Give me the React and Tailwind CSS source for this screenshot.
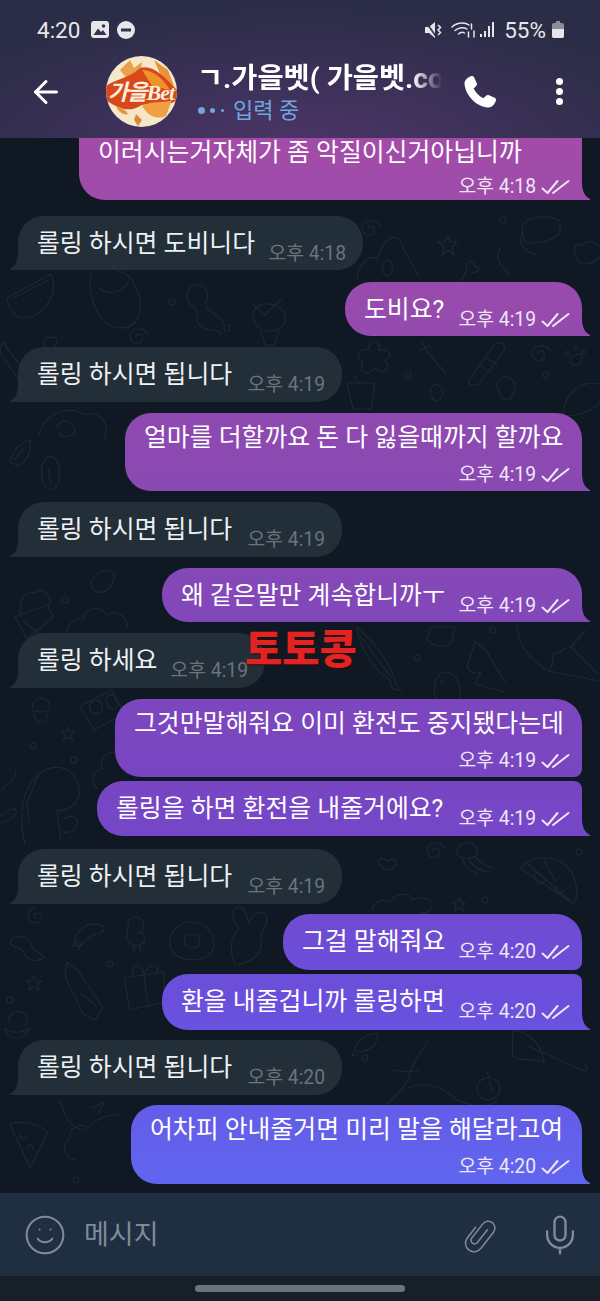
import React from "react";
import { ArrowLeft, Smile, Mic } from "lucide-react";

const KR = "font-['Roboto','Noto_Sans_CJK_KR',sans-serif]";
const GRAD = "bg-[linear-gradient(180deg,#a34ca8_130px,#8a49b2_480px,#7845c2_780px,#6a4fdc_1000px,#6065f0_1180px)] bg-fixed";

const messages = [
  { out: true, text: "이러시는거자체가 좀 악질이신거아닙니까", time: "오후 4:18", box: "w-[503px] h-[62px] mt-0 rounded-t-none", stacked: true, first: true, tail: true },
  { text: "롤링 하시면 도비니다", time: "오후 4:18", box: "w-[345px] h-[54px] mt-[16px]", tail: true },
  { out: true, text: "도비요?", time: "오후 4:19", box: "w-[237px] h-[54px] mt-[12px]", tail: true },
  { text: "롤링 하시면 됩니다", time: "오후 4:19", box: "w-[324px] h-[55px] mt-[11px]", tail: true },
  { out: true, text: "얼마를 더할까요 돈 다 잃을때까지 할까요", time: "오후 4:19", box: "w-[457px] h-[78px] mt-[11px]", stacked: true, tail: true },
  { text: "롤링 하시면 됩니다", time: "오후 4:19", box: "w-[324px] h-[55px] mt-[11px]", tail: true },
  { out: true, text: "왜 같은말만 계속합니까ㅜ", time: "오후 4:19", box: "w-[420px] h-[54px] mt-[11px]", tail: true },
  { text: "롤링 하세요", time: "오후 4:19", box: "w-[247px] h-[55px] mt-[11px]", tail: true },
  { out: true, text: "그것만말해줘요 이미 환전도 중지됐다는데", time: "오후 4:19", box: "w-[467px] h-[78px] mt-[11px] rounded-br-[8px]", stacked: true },
  { out: true, text: "롤링을 하면 환전을 내줄거에요?", time: "오후 4:19", box: "w-[485px] h-[55px] mt-[4px] rounded-tr-[8px]", tail: true },
  { text: "롤링 하시면 됩니다", time: "오후 4:19", box: "w-[324px] h-[55px] mt-[13px]", tail: true },
  { out: true, text: "그걸 말해줘요", time: "오후 4:20", box: "w-[299px] h-[56px] mt-[10px] rounded-br-[8px]" },
  { out: true, text: "환을 내줄겁니까 롤링하면", time: "오후 4:20", box: "w-[420px] h-[56px] mt-[4px] rounded-tr-[8px]", tail: true },
  { text: "롤링 하시면 됩니다", time: "오후 4:20", box: "w-[324px] h-[55px] mt-[10px]", tail: true },
  { out: true, text: "어차피 안내줄거면 미리 말을 해달라고여", time: "오후 4:20", box: "w-[451px] h-[79px] mt-[10px]", stacked: true, tail: true },
];

// wallpaper sketches: [x, y, path]
const doodles = [
  [5, 272, "M2 26 L46 2 C54 22 40 46 16 46 C8 44 4 36 2 26 Z M8 26 L44 8 M18 26 v2 M30 18 v2 M24 34 v2 M36 28 v2"],
  [85, 268, "M6 4 C2 30 14 60 36 60 C56 60 60 36 50 18 C46 8 38 2 32 4 M14 20 C24 28 38 24 44 14"],
  [180, 283, "M14 2 C4 6 6 20 14 24 C22 30 12 38 22 44 C32 50 40 44 42 54 M14 2 C26 0 30 12 26 20 C24 30 38 28 44 40"],
  [245, 293, "M8 12 L20 22 L36 6 M10 16 C4 26 12 38 24 38 C38 38 44 28 38 18 C32 10 16 8 10 16 M16 38 L20 52 H30 L34 38"],
  [0, 340, "M0 8 L4 2 L8 10 L26 32 L18 38 L2 16 Z"],
  [40, 335, "M8 14 C0 8 4 0 10 3 C16 -1 20 6 14 12 Z"],
  [128, 328, "M8 8 C10 4 16 6 14 12 C12 18 2 16 2 8 C2 0 16 -2 20 6"],
  [35, 405, "M4 30 C10 6 36 0 50 10 C66 4 76 20 68 36 M22 22 C26 14 36 14 40 24 C40 32 28 34 24 28"],
  [10, 440, "M0 22 C4 8 12 2 20 0 C22 12 16 22 8 26 Z M4 20 L14 8"],
  [40, 455, "M8 2 C18 -2 22 16 18 28 C14 38 2 36 2 22 C0 12 2 6 8 2 Z M8 14 C10 18 8 24 12 28"],
  [13, 587, "M2 30 L34 18 L40 30 L14 52 Z M8 28 C4 14 14 2 22 6 C30 0 40 8 36 20 M10 34 L28 48"],
  [90, 570, "M2 10 C8 0 18 -2 24 4 C26 14 16 24 8 22 C2 20 0 16 2 10 Z M8 12 h1 M16 10 h1"],
  [65, 605, "M2 26 C4 14 14 14 18 14 C20 2 36 0 42 10 C52 4 64 12 62 24"],
  [78, 690, "M2 16 L34 0 L46 24 L16 40 Z M12 20 a6 6 0 1 0 12 -6 a6 6 0 1 0 -12 6 M30 14 a5 5 0 1 0 8 -4 a5 5 0 1 0 -8 4"],
  [30, 695, "M2 14 C2 2 18 -2 20 12 C20 18 2 18 2 14 Z M4 18 C4 28 16 32 18 18"],
  [62, 727, "M6 0 L8 5 L13 5 L9 8 L11 13 L6 10 L1 13 L3 8 L-1 5 L4 5 Z"],
  [15, 760, "M10 84 C4 60 4 24 30 10 C46 2 62 12 64 28 C66 44 52 52 42 50 L46 82 M24 14 L18 28 L12 42 L14 62 M50 58 C58 54 66 58 60 68 C56 74 50 72 46 72"],
  [90, 745, "M8 44 C-2 36 4 24 12 24 C8 8 26 2 34 12"],
  [0, 760, "M2 30 C8 22 16 20 16 10"],
  [0, 805, "M0 12 C10 2 18 2 16 8 C12 16 4 18 0 18"],
  [25, 905, "M10 2 C2 4 0 16 10 18 C18 18 20 8 12 8 C8 8 8 14 12 13"],
  [70, 920, "M4 24 C6 8 20 0 34 6 C36 16 22 12 16 20 C12 26 8 28 4 24 Z M8 20 L2 28 M12 22 L8 30"],
  [120, 915, "M8 12 a8 8 0 1 1 10 6 C26 16 28 26 20 30 C10 32 4 26 8 12 Z M14 30 V38 M20 30 V36"],
  [168, 920, "M24 2 C36 2 46 12 46 24 C46 34 36 40 24 40 C10 40 2 32 2 22 C2 10 12 2 24 2 Z M24 14 C30 14 32 18 32 22 C32 26 28 28 24 28 C18 28 16 24 16 20 C16 16 20 14 24 14 Z"],
  [225, 905, "M10 60 C2 40 8 30 14 24 C6 14 6 2 14 2 C22 2 22 16 24 18 C28 6 40 4 42 14 C42 24 34 26 36 36 C38 48 28 58 10 60 Z M16 36 h1 M26 34 h1"],
  [8, 935, "M2 6 C10 -2 22 2 24 12 C28 18 34 18 36 22 M2 6 C2 14 14 10 16 18 C20 26 30 28 36 22"],
  [27, 975, "M7 0 L9 5 L15 6 L10 9 L12 15 L7 12 L2 15 L4 9 L-1 6 L5 5 Z"],
  [65, 960, "M2 2 L14 12 L38 48 L30 60 L18 54 L0 16 Z M16 34 L32 46"],
  [122, 960, "M2 18 L42 12 V42 L8 50 Z M2 18 L8 50 M22 16 L26 46 M12 16 C6 4 20 2 22 14 C26 2 40 4 34 14"],
  [5, 1008, "M4 14 C2 6 14 0 20 6 C24 12 22 16 20 18 M0 20 C2 34 20 34 24 20 C16 26 8 26 0 20 Z"],
  [8, 1120, "M2 4 C14 0 30 4 40 12 L22 48 Z M12 14 a3 3 0 1 0 6 2 M24 30 a3 3 0 1 0 -5 -2"],
  [60, 1100, "M16 60 C4 58 0 44 10 38 C8 28 20 22 28 28 C36 18 54 12 60 16 M0 0 C4 16 12 30 24 30 M32 8 L44 2 L38 14"],
  [360, 220, "M8 8 C10 4 16 6 14 12 C12 18 2 16 2 8 C2 0 16 -2 20 6"],
  [355, 235, "M2 44 C4 26 18 18 22 24 C26 8 38 -2 44 4 C48 14 58 30 64 42 M30 26 a5 8 0 1 0 2 -1"],
  [440, 235, "M8 0 L10 7 L17 7 L12 12 L14 20 L8 15 L2 20 L4 12 L-2 7 L5 7 Z"],
  [455, 260, "M4 24 L12 10 C8 2 18 -2 20 6 C26 6 24 14 16 12"],
  [495, 245, "M6 2 C-2 14 8 22 14 30"],
  [520, 215, "M2 10 C10 0 30 0 40 6 V18 C30 28 12 30 4 26 Z M2 18 C-2 28 4 36 16 40"],
  [570, 240, "M6 14 C2 6 8 2 12 6 C16 0 26 0 30 8 C34 16 26 24 14 24 C8 24 6 20 6 14 Z"],
  [355, 340, "M20 2 C24 2 26 8 24 10 C34 8 40 16 30 20 C38 28 28 36 20 28 C14 38 2 32 8 22 C-2 18 4 6 14 10 C12 6 16 2 20 2 Z"],
  [345, 375, "M2 8 H30 L26 34 H8 Z M10 0 C10 6 14 8 16 8"],
  [465, 340, "M4 40 L30 4 C38 0 42 6 38 12 L14 44 C8 46 2 46 4 40 Z M14 26 L26 32 M20 18 L32 24"],
  [420, 340, "M2 2 L6 10 L26 34 M10 6 L0 10"],
  [530, 345, "M8 8 C10 4 16 6 14 12 C12 18 2 16 2 8 C2 0 16 -2 20 6"],
  [565, 345, "M10 10 C18 6 20 18 12 20 C4 20 2 12 10 10 Z M2 6 a2 2 0 1 0 1 0 M10 1 a2 2 0 1 0 1 0 M18 5 a2 2 0 1 0 1 0"],
  [430, 385, "M4 0 C12 -2 16 10 8 16 C0 16 -2 4 4 0 Z"],
  [495, 375, "M2 10 C6 -2 20 0 20 12 C20 18 16 20 16 24 H8 C8 20 2 18 2 10 Z"],
  [560, 380, "M4 36 C2 14 20 0 40 4 M4 36 C20 36 34 30 40 22 M12 16 h1"],
  [355, 625, "M2 2 C16 14 38 40 40 58 L46 66 L38 64 L34 54 C22 48 4 24 2 2 Z M6 12 L36 52"],
  [425, 625, "M6 2 L30 2 L26 18 C18 24 6 20 2 14 Z"],
  [465, 640, "M10 2 L2 26 C4 34 14 34 16 32 L10 44 L40 52 M10 2 C16 6 24 12 24 16 L34 32 L40 42"],
  [432, 670, "M14 2 C24 2 30 16 28 30 H4 C0 18 4 2 14 2 Z M10 10 v4"],
  [515, 625, "M2 0 C4 22 14 34 34 46 L84 56 M34 46 C40 38 36 30 40 28 C48 28 50 20 56 22 L70 6 M56 22 L82 48"],
  [425, 842, "M8 8 C10 4 16 6 14 12 C12 18 2 16 2 8 C2 0 16 -2 20 6"],
  [375, 858, "M10 12 C2 6 2 0 8 1 C12 1 14 4 14 4 C16 0 22 0 21 6 C20 10 14 12 10 12 Z"],
  [455, 840, "M2 12 C2 2 18 -2 22 10 C24 16 18 18 10 18 C6 18 2 16 2 12 Z M8 18 C8 26 16 30 22 34 M14 18 C16 26 24 30 32 32 M20 16 C22 20 30 26 38 28"],
  [518, 852, "M2 16 C16 0 42 4 52 18 C60 32 60 44 56 52 Z M10 12 L56 52 M26 8 L38 30 M20 20 a6 6 0 1 0 8 8 M40 34 a4 4 0 1 0 6 4"],
  [370, 890, "M2 20 C4 10 14 8 20 12 C26 2 40 2 42 10 C50 6 64 8 62 16 C62 22 54 24 50 22"],
  [452, 898, "M7 0 L9 4 L13 5 L10 8 L11 13 L7 10 L3 13 L4 8 L0 5 L5 4 Z"],
  [352, 1030, "M2 20 C6 8 18 2 26 4 C26 14 16 22 8 22 Z M2 20 L0 26 L6 24"],
  [385, 1040, "M2 64 C12 54 20 50 24 36 C28 20 38 10 42 2 M24 48 C40 40 60 48 72 60 C86 66 98 68 112 62 M8 30 C16 32 28 32 34 30"],
  [510, 1030, "M4 0 C20 2 32 16 34 32 C22 28 12 32 2 26 C4 18 0 8 4 0 Z M18 16 L72 40 C80 44 78 34 74 36"],
  [475, 1070, "M4 12 C10 6 20 6 24 14 C28 24 20 30 12 30 C2 28 0 20 4 12 Z M12 2 L14 8 M14 12 L18 22"],
];
const dots = [[172, 302], [227, 328], [65, 600], [33, 746], [74, 760], [110, 964], [417, 658], [493, 630], [503, 220], [408, 375], [546, 375], [579, 852], [485, 900], [365, 1058], [10, 1000], [76, 1180]];

const Checks = () => (
  <svg width="29" height="16" viewBox="0 0 29 16" fill="none" stroke="#f0e6f6" strokeWidth="2" strokeLinecap="round" strokeLinejoin="round">
    <path d="M1.5 9.5 L6.5 14 L16.5 2" />
    <path d="M12 14 L27.5 2" />
  </svg>
);

const Meta = ({ msg }) => (
  <div className={`flex items-center gap-[5px] text-[19.3px] leading-[24px] whitespace-nowrap ${msg.out ? "text-[#f0e6f6]" : "text-[#69747f]"}`}>
    <span>{msg.time}</span>
    {msg.out && <Checks />}
  </div>
);

const Bubble = ({ msg }) => {
  const tone = msg.out
    ? `${GRAD} self-end mr-[18px] text-white`
    : "bg-[#222e38] self-start ml-[18px] text-[#eef1f4]";
  const corners = msg.tail
    ? msg.out
      ? "rounded-[26px] rounded-br-none"
      : "rounded-[26px] rounded-bl-none"
    : "rounded-[26px]";
  const pad = msg.out ? "pl-[19px] pr-[12px]" : "pl-[19px] pr-[17px]";
  return (
    <div className={`relative shrink-0 ${tone} ${corners} ${msg.box}`}>
      {msg.stacked ? (
        <div className={`flex h-full flex-col ${pad} ${msg.first ? "pt-[0px]" : "pt-[10px]"}`}>
          <p className="text-[24.85px] leading-[30px] whitespace-nowrap">{msg.text}</p>
          <div className={`flex justify-end ${msg.first ? "mt-[7px]" : "mt-[10px]"}`}>
            <Meta msg={msg} />
          </div>
        </div>
      ) : (
        <div className={`flex h-full justify-between ${pad}`}>
          <p className="pt-[13px] text-[24.85px] leading-[30px] whitespace-nowrap">{msg.text}</p>
          <div className="pt-[26px]">
            <Meta msg={msg} />
          </div>
        </div>
      )}
      {msg.tail && !msg.out && (
        <div className="absolute left-[-9px] bottom-0 h-[18px] w-[10px] bg-[#222e38] [clip-path:path('M10_0L9_0C9_8_7_14_1_17Q0_18_2_18L10_18Z')]" />
      )}
      {msg.tail && msg.out && (
        <div className={`absolute right-[-9px] bottom-0 h-[18px] w-[10px] ${GRAD} [clip-path:path('M0_0L1_0C1_8_3_14_9_17Q10_18_8_18L0_18Z')]`} />
      )}
    </div>
  );
};

const Doodles = () => (
  <svg className="absolute inset-0 h-full w-full" viewBox="0 0 600 1301" fill="none" stroke="#1c2835" strokeWidth="1.2" strokeLinecap="round" strokeLinejoin="round">
    {doodles.map(([x, y, d], i) => (
      <path key={i} d={d} transform={`translate(${x} ${y})`} />
    ))}
    {dots.map(([x, y], i) => (
      <circle key={i} cx={x} cy={y} r="3" />
    ))}
  </svg>
);

const Avatar = () => (
  <svg className="shrink-0" width="71" height="71" viewBox="0 0 71 71">
    <defs>
      <clipPath id="av"><circle cx="35.5" cy="35.5" r="35.5" /></clipPath>
    </defs>
    <g clipPath="url(#av)">
      <rect width="71" height="71" fill="#f6e7cb" />
      <path d="M14 14 L24 4 L28 12 L36 6 L34 18 L22 24 Z" fill="#eaa04a" />
      <path d="M48 4 L62 14 L68 30 L56 22 Z" fill="#e8943a" />
      <path d="M0 30 C12 22 24 22 34 12 C46 8 58 20 71 34 L71 44 C58 54 46 44 34 50 C22 58 8 50 0 44 Z" fill="#d8481a" />
      <path d="M36 14 C48 14 58 24 64 34 L46 30 Z" fill="#f0922a" />
      <path d="M36 50 C46 44 56 48 66 44 L60 60 C50 64 42 60 36 50 Z" fill="#f0a040" />
      <path d="M10 50 C16 52 20 54 22 58 C18 60 12 56 10 50 Z" fill="#e09a4a" />
      <path d="M30 58 L36 64 L32 70 L28 64 Z" fill="#d88a3a" />
    </g>
    <text x="35" y="44" textAnchor="middle" fontSize="22" fontWeight="700" fontStyle="italic" fill="#fbeedd" fontFamily="'Liberation Serif','Noto Sans CJK KR',serif" letterSpacing="-1">가을Bet</text>
  </svg>
);

const StatusBar = () => (
  <div className="flex h-[44px] items-start pl-[37px] pr-[36px] pt-[17px] text-[#e6e6ec]">
    <span className="text-[22.5px] leading-[26px]">4:20</span>
    <svg className="ml-[11px] mt-[4px]" width="18" height="17" viewBox="0 0 18 17">
      <rect width="18" height="17" rx="3" fill="#e6e6ec" />
      <circle cx="12.5" cy="5" r="1.8" fill="#3a3048" />
      <path d="M2.5 14 L7 7.5 L10 11 L12 9 L15.5 14 Z" fill="#3a3048" />
    </svg>
    <svg className="ml-[8px] mt-[4px]" width="18" height="18" viewBox="0 0 18 18">
      <circle cx="9" cy="9" r="9" fill="#e6e6ec" />
      <rect x="4" y="7.5" width="10" height="3" fill="#33304a" />
    </svg>
    <svg className="ml-auto mt-[4px]" width="18" height="18" viewBox="0 0 18 18" fill="#e6e6ec">
      <path d="M0 6 H4 L10 1 V17 L4 12 H0 Z" />
      <path d="M1 1 L12 17" stroke="#33304a" strokeWidth="1.6" />
      <path d="M13 4 L15.5 6.5 L13 9 L15.5 11.5 L13 14" stroke="#e6e6ec" strokeWidth="1.5" fill="none" />
    </svg>
    <svg className="ml-[8px] mt-[4px]" width="25" height="18" viewBox="0 0 25 18" fill="none" stroke="#e6e6ec" strokeWidth="1.5" strokeLinecap="round">
      <path d="M1 6 C6 1 14 1 18 4" />
      <path d="M4 9.5 C8 6 13 6 16 8" />
      <path d="M7.5 13 C9.5 11 12 11 13.5 12" />
      <path d="M20.5 3 V8 M17.5 11 V16 M23 10 V16" />
    </svg>
    <svg className="ml-[4px] mt-[4px]" width="15" height="17" viewBox="0 0 15 17" fill="#e6e6ec">
      <rect x="0" y="13" width="2" height="3" />
      <rect x="4" y="10" width="2" height="6" />
      <rect x="8" y="5" width="2" height="11" />
      <rect x="12" y="1" width="2" height="15" />
    </svg>
    <span className="ml-[9px] text-[22.5px] leading-[26px]">55%</span>
    <svg className="ml-[6px] mt-[4px]" width="12" height="17" viewBox="0 0 12 17">
      <path d="M4 0 H8 V2 H10 Q12 2 12 4 V15 Q12 17 10 17 H2 Q0 17 0 15 V4 Q0 2 2 2 H4 Z" fill="#8f8a9c" />
      <path d="M0 8 H12 V15 Q12 17 10 17 H2 Q0 17 0 15 Z" fill="#e6e6ec" />
    </svg>
  </div>
);

const Header = () => (
  <header className="relative z-10 h-[138px] shrink-0 bg-[radial-gradient(ellipse_420px_150px_at_300px_150px,#4d3568_0%,#3a3056_55%,#2a2d45_100%)]">
    <StatusBar />
    <div className="flex items-center pt-[12px]">
      <ArrowLeft className="ml-[28px] text-white" size={36} strokeWidth={2} />
      <div className="ml-[42px]">
        <Avatar />
      </div>
      <div className="ml-[20px] w-[245px]">
        <p className="h-[38px] whitespace-nowrap text-[28.4px] font-bold leading-[38px] text-white [mask-image:linear-gradient(90deg,#000_88%,transparent_100%)]">ㄱ.가을벳( 가을벳.co</p>
        <div className="flex items-center pl-[1px]">
          <span className="h-[7px] w-[7px] rounded-full bg-[#6ea6e0]" />
          <span className="ml-[5px] h-[5px] w-[5px] rounded-full bg-[#6ea6e0]" />
          <span className="ml-[6px] h-[3px] w-[3px] rounded-full bg-[#6ea6e0]" />
          <span className="ml-[9px] text-[22px] leading-[26px] text-[#6ea6e0]">입력 중</span>
        </div>
      </div>
      <svg className="ml-[18px]" width="40" height="40" viewBox="0 0 24 24" fill="#fff">
        <path d="M6.6 2.5 C7.3 2.2 8 2.5 8.4 3.2 L10 6.6 C10.3 7.2 10.2 7.9 9.7 8.4 L8.2 9.9 C9.2 12.2 11.4 14.5 14 15.8 L15.6 14.2 C16.1 13.7 16.8 13.6 17.4 13.9 L20.8 15.5 C21.5 15.9 21.8 16.6 21.5 17.3 C20.8 19.6 18.9 21.5 16.8 21.3 C9.7 20.6 3.4 14.2 2.7 7.2 C2.5 5.1 4.4 3.2 6.6 2.5 Z" />
      </svg>
      <div className="ml-[56px] flex flex-col gap-[3px]">
        <span className="h-[7px] w-[7px] rounded-full bg-white" />
        <span className="h-[7px] w-[7px] rounded-full bg-white" />
        <span className="h-[7px] w-[7px] rounded-full bg-white" />
      </div>
    </div>
  </header>
);

const Composer = () => (
  <footer className="relative z-10 shrink-0">
    <div className="flex h-[83px] items-center bg-[#1f2e41] text-[#7e8c99]">
      <Smile className="ml-[23px]" size={44} strokeWidth={1.1} />
      <span className="ml-[17px] text-[27px] leading-[32px]">메시지</span>
      <svg className="ml-auto" width="36" height="40" viewBox="-20 -22 40 44" fill="none" stroke="currentColor" strokeWidth="1.7" strokeLinecap="round">
        <path transform="rotate(38)" d="M2 -9 V9 a4 4 0 0 1 -8 0 V-11 a7.5 7.5 0 0 1 15 0 V12 a9.5 9.5 0 0 1 -19 0 V-3" />
      </svg>
      <Mic className="ml-[39px] mr-[18px]" size={44} strokeWidth={1.3} />
    </div>
    <div className="flex h-[25px] justify-center bg-[#171f29] pt-[9px]">
      <span className="h-[7px] w-[210px] rounded-full bg-[#6b737d]" />
    </div>
  </footer>
);

export default function App() {
  return (
    <div className={`relative flex h-[1301px] w-[600px] flex-col overflow-hidden bg-[#101823] ${KR}`}>
      <Doodles />
      <Header />
      <main className="relative flex h-[1055px] shrink-0 flex-col">
        {messages.map((msg, i) => (
          <Bubble key={i} msg={msg} />
        ))}
      </main>
      <Composer />
      <span className="absolute left-[245px] top-[626px] z-20 text-[40.5px] font-black leading-[48px] text-[#e32222] [text-shadow:1px_1px_1px_#2a0a0a]">토토콩</span>
    </div>
  );
}
